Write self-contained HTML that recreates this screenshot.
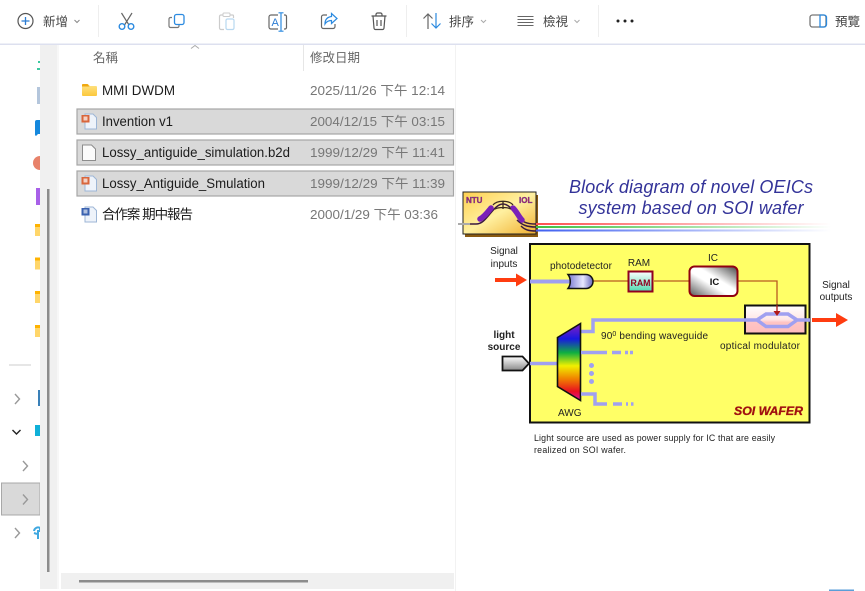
<!DOCTYPE html>
<html><head><meta charset="utf-8">
<style>
html,body{margin:0;padding:0;background:#fff;width:865px;height:591px;overflow:hidden}
svg{display:block;filter:blur(.3px)}
.ui{font-family:"Liberation Sans","Noto Sans CJK TC",sans-serif}
.tb{font-size:12.500px;fill:#444}
.n{font-size:13.500px;fill:#1c1c1c}
.d{font-size:13px;fill:#777}
.h{font-size:12.500px;fill:#666}
.dg{font-family:"Liberation Sans",sans-serif;font-size:10px;fill:#222}
</style></head><body>
<svg width="865" height="591" viewBox="0 0 865 591" xmlns="http://www.w3.org/2000/svg" class="ui">
<defs>
<linearGradient id="awg" x1="0" y1="0" x2="0" y2="1">
<stop offset="0" stop-color="#8a20c0"/><stop offset=".2" stop-color="#1818e0"/><stop offset=".38" stop-color="#10b040"/><stop offset=".55" stop-color="#f0f000"/><stop offset=".72" stop-color="#f08000"/><stop offset=".88" stop-color="#e81020"/><stop offset="1" stop-color="#e010a0"/>
</linearGradient>
<linearGradient id="ic" x1="0" y1="1" x2="1" y2="0"><stop offset="0" stop-color="#555"/><stop offset=".42" stop-color="#fff"/><stop offset=".58" stop-color="#fff"/><stop offset="1" stop-color="#444"/></linearGradient>
<linearGradient id="logo" x1="0" y1="0" x2="1" y2="1"><stop offset="0" stop-color="#ffd050"/><stop offset=".5" stop-color="#fff0a0"/><stop offset="1" stop-color="#f0b030"/></linearGradient>
<linearGradient id="mod" x1="0" y1="0" x2="0" y2="1"><stop offset="0" stop-color="#fff"/><stop offset=".5" stop-color="#ffe6e6"/><stop offset=".6" stop-color="#ffc4c4"/><stop offset="1" stop-color="#ffbcbc"/></linearGradient>
<linearGradient id="pd" x1="0" y1="0" x2="1" y2="0"><stop offset="0" stop-color="#7878d0"/><stop offset=".6" stop-color="#e8e8ff"/><stop offset="1" stop-color="#6666bb"/></linearGradient>
<linearGradient id="ram" x1="0" y1="0" x2="0" y2="1"><stop offset="0" stop-color="#fff"/><stop offset="1" stop-color="#50d8b0"/></linearGradient>
<linearGradient id="ls" x1="0" y1="0" x2="0" y2="1"><stop offset="0" stop-color="#fff"/><stop offset="1" stop-color="#888"/></linearGradient>
<linearGradient id="fr" x1="0" y1="0" x2="1" y2="0"><stop offset="0" stop-color="#ff5050"/><stop offset="1" stop-color="#ff5050" stop-opacity="0"/></linearGradient>
<linearGradient id="fg" x1="0" y1="0" x2="1" y2="0"><stop offset="0" stop-color="#40c040"/><stop offset="1" stop-color="#40c040" stop-opacity="0"/></linearGradient>
<linearGradient id="fb" x1="0" y1="0" x2="1" y2="0"><stop offset="0" stop-color="#4060f0"/><stop offset="1" stop-color="#4060f0" stop-opacity="0"/></linearGradient>
<linearGradient id="fold" x1="0" y1="0" x2="0" y2="1"><stop offset="0" stop-color="#ffe58a"/><stop offset="1" stop-color="#fcc83c"/></linearGradient>
</defs>

<!-- toolbar -->
<rect x="0" y="43.500" width="865" height="1.500" fill="#dde0ef"/>
<g fill="none" stroke="#eee"><path d="M98.500 5V37M406.500 5V37M598.500 5V37"/></g>
<circle cx="25.500" cy="21" r="7.500" fill="none" stroke="#555" stroke-width="1.200"/>
<path d="M25.500 17v8M21.500 21h8" stroke="#2b7cd3" stroke-width="1.300"/>
<text x="43" y="26" class="tb">新增</text>
<path d="M74.500 20l2.500 2.500 2.500-2.500" fill="none" stroke="#888"/>
<!-- cut -->
<path d="M121.500 13l7.500 12M132 13l-7.500 12" fill="none" stroke="#666" stroke-width="1.200"/>
<circle cx="122" cy="26.500" r="2.800" fill="none" stroke="#2b8ae0" stroke-width="1.400"/>
<circle cx="131" cy="26.500" r="2.800" fill="none" stroke="#2b8ae0" stroke-width="1.400"/>
<!-- copy -->
<path d="M172 17.500h-1.500a1.500 1.500 0 0 0-1.500 1.500v7a1.500 1.500 0 0 0 1.500 1.500h7a1.500 1.500 0 0 0 1.500-1.500v-1" fill="none" stroke="#777" stroke-width="1.200"/>
<rect x="174.500" y="14.500" width="9.500" height="10" rx="2" fill="none" stroke="#2b8ae0" stroke-width="1.300"/>
<!-- paste -->
<path d="M223 15h-2a1.500 1.500 0 0 0-1.500 1.500V28a1.500 1.500 0 0 0 1.500 1.500h3M230 15h2.500a1 1 0 0 1 1 1v2" fill="none" stroke="#ccc" stroke-width="1.200"/>
<rect x="223" y="13" width="7" height="3.500" rx="1" fill="none" stroke="#ccc"/>
<rect x="226" y="19" width="8" height="10.500" rx="1.500" fill="none" stroke="#b8d8f0" stroke-width="1.200"/>
<!-- rename -->
<path d="M278 15h-7a2 2 0 0 0-2 2v10a2 2 0 0 0 2 2h7M284 15h1a1.500 1.500 0 0 1 1.500 1.500v11a1.500 1.500 0 0 1-1.500 1.500h-1" fill="none" stroke="#666" stroke-width="1.200"/>
<path d="M281 13v18M278.500 12.800h5M278.500 31.200h5" fill="none" stroke="#2b8ae0" stroke-width="1.200"/>
<text x="271.500" y="26" font-size="11" fill="#2b7cd3">A</text>
<!-- share -->
<path d="M327 15h-3.500a2 2 0 0 0-2 2v9.500a2 2 0 0 0 2 2h9.500a2 2 0 0 0 2-2V24" fill="none" stroke="#666" stroke-width="1.200"/>
<path d="M331.500 13.500l5.500 5-5.500 5v-3c-3 0-5 1-6.500 3.500 0-4.500 2.500-7 6.500-7.500z" fill="none" stroke="#2b8ae0" stroke-width="1.200"/>
<!-- trash -->
<path d="M371.500 16h15M376 16v-1.500a1.500 1.500 0 0 1 1.500-1.500h3a1.500 1.500 0 0 1 1.500 1.500V16M373 16l1 12a1.500 1.500 0 0 0 1.500 1.500h7a1.500 1.500 0 0 0 1.500-1.500l1-12M377 20v6M381 20v6" fill="none" stroke="#555" stroke-width="1.200"/>
<!-- sort -->
<path d="M428 29V14M423.500 18.500L428 14l4.500 4.500" fill="none" stroke="#666" stroke-width="1.200"/>
<path d="M436 13v15M431.500 23.500L436 28l4.500-4.500" fill="none" stroke="#2b8ae0" stroke-width="1.200"/>
<text x="449" y="26" class="tb">排序</text>
<path d="M481 20l2.500 2.500 2.500-2.500" fill="none" stroke="#aaa"/>
<!-- view -->
<path d="M517.500 16.500h16M517.500 19.500h16M517.500 22.500h16M517.500 25.500h16" stroke="#666"/>
<text x="543" y="26" class="tb">檢視</text>
<path d="M574.500 20l2.500 2.500 2.500-2.500" fill="none" stroke="#aaa"/>
<circle cx="618" cy="21" r="1.500" fill="#222"/><circle cx="625" cy="21" r="1.500" fill="#222"/><circle cx="632" cy="21" r="1.500" fill="#222"/>
<!-- preview -->
<rect x="810" y="15" width="16" height="12" rx="2.500" fill="none" stroke="#777" stroke-width="1.300"/>
<path d="M820 15h4a2.500 2.500 0 0 1 2.500 2.500v7a2.500 2.500 0 0 1-2.500 2.500h-4z" fill="none" stroke="#2b8ae0" stroke-width="1.300"/>
<text x="835" y="26" class="tb">預覽</text>

<!-- nav pane stubs -->
<rect x="38" y="61" width="2" height="2" fill="#3cc8a0"/><rect x="37" y="68" width="3" height="2" fill="#3cc8a0"/>
<rect x="37" y="87" width="3" height="17" fill="#b4c6dc"/>
<path d="M35 122a2 2 0 0 1 2-2h3v14h-2l-2 2a2 2 0 0 1-1-2z" fill="#1588dd"/>
<path d="M40 156v14a7 7 0 0 1 0-14z" fill="#e8826a"/>
<rect x="36" y="188" width="4" height="17" fill="#a860e8"/>
<g fill="#ffd66a"><rect x="35" y="224" width="5" height="12"/><rect x="35" y="257.500" width="5" height="12"/><rect x="35" y="291" width="5" height="12"/><rect x="35" y="325" width="5" height="12"/></g>
<g fill="#ffb300"><rect x="35" y="224" width="5" height="3"/><rect x="35" y="257.500" width="5" height="3"/><rect x="35" y="291" width="5" height="3"/><rect x="35" y="325" width="5" height="3"/></g>
<rect x="9" y="364" width="22" height="2" fill="#e6e6e6"/>
<rect x="38" y="390" width="2" height="16" fill="#3a80b8"/>
<rect x="35" y="425" width="5" height="11" fill="#10b0d8"/>
<rect x="1.500" y="483" width="38.500" height="32" fill="#d9d9d9" stroke="#a8a8a8"/>
<rect x="40" y="483" width="1" height="33" fill="#f0f0f0"/>
<path d="M34 531a4 4 0 0 1 6-3v3h-2v8M34 533l3 1" fill="none" stroke="#40a8e0" stroke-width="2"/>
<g fill="none" stroke="#999" stroke-width="1.400">
<path d="M15 394l4.500 5-4.500 5M23 461l4.500 5-4.500 5M23 494.500l4.500 5-4.500 5M15 528l4.500 5-4.500 5"/></g>
<path d="M12.500 430l4 4 4-4" fill="none" stroke="#222" stroke-width="1.400"/>

<!-- nav scrollbar -->
<rect x="40" y="45" width="17" height="544" fill="#f0f0f0"/>
<rect x="57" y="45" width="2" height="544" fill="#f7f7f7"/>
<rect x="47" y="189" width="2.500" height="383" fill="#8c8c8c"/>

<!-- list header -->
<path d="M191 48.500l4-3 4 3" fill="none" stroke="#aaa"/>
<text x="93" y="62" class="h">名稱</text>
<rect x="303" y="45" width="1" height="26" fill="#e6e6e6"/>
<text x="310" y="62" class="h">修改日期</text>
<rect x="455" y="45" width="1" height="546" fill="#f2f2f2"/>

<!-- rows -->
<g fill="#d9d9d9" stroke="#a6a6a6" stroke-width="1.200">
<rect x="77" y="109" width="376.500" height="25"/>
<rect x="77" y="140" width="376.500" height="25"/>
<rect x="77" y="171" width="376.500" height="25"/>
</g>

<!-- folder icon -->
<path d="M82 85a1 1 0 0 1 1-1h5l2 2h6a1 1 0 0 1 1 1v8a1 1 0 0 1-1 1H83a1 1 0 0 1-1-1z" fill="url(#fold)"/>
<path d="M82 85a1 1 0 0 1 1-1h4.500l2 2.500H82z" fill="#f0a810"/>
<text x="102" y="95" class="n" textLength="73" lengthAdjust="spacingAndGlyphs">MMI DWDM</text>
<text x="310" y="95" class="d" textLength="135" lengthAdjust="spacingAndGlyphs">2025/11/26 下午 12:14</text>

<!-- ppt icon 1 -->
<path d="M85 114h8l3.500 3.500V129H85z" fill="#eef3fa" stroke="#9db6d6"/><rect x="81.500" y="115" width="8" height="7.500" fill="#d9663c"/><rect x="83.500" y="116.500" width="4" height="4" fill="#fff" opacity=".7"/>
<text x="102" y="126" class="n" textLength="71" lengthAdjust="spacingAndGlyphs">Invention v1</text>
<text x="310" y="126" class="d" textLength="135" lengthAdjust="spacingAndGlyphs">2004/12/15 下午 03:15</text>

<path d="M82.500 145h9l4 4v11.500h-13z" fill="#fbfbfb" stroke="#8c8c8c"/>
<text x="102" y="157" class="n" textLength="188" lengthAdjust="spacingAndGlyphs">Lossy_antiguide_simulation.b2d</text>
<text x="310" y="157" class="d" textLength="135" lengthAdjust="spacingAndGlyphs">1999/12/29 下午 11:41</text>

<g transform="translate(0,62)"><path d="M85 114h8l3.500 3.500V129H85z" fill="#eef3fa" stroke="#9db6d6"/><rect x="81.500" y="115" width="8" height="7.500" fill="#d9663c"/><rect x="83.500" y="116.500" width="4" height="4" fill="#fff" opacity=".7"/></g>
<text x="102" y="188" class="n" textLength="163" lengthAdjust="spacingAndGlyphs">Lossy_Antiguide_Smulation</text>
<text x="310" y="188" class="d" textLength="135" lengthAdjust="spacingAndGlyphs">1999/12/29 下午 11:39</text>

<g transform="translate(0,93)"><path d="M85 114h8l3.500 3.500V129H85z" fill="#eef3fa" stroke="#9db6d6"/><rect x="81.500" y="115" width="8" height="7.500" fill="#3a62b0"/><rect x="83.500" y="116.500" width="4" height="4" fill="#fff" opacity=".6"/></g>
<text x="102" y="219" class="n" font-size="13" textLength="91">合作案 期中報告</text>
<text x="310" y="219" class="d" textLength="128" lengthAdjust="spacingAndGlyphs">2000/1/29 下午 03:36</text>

<!-- h scrollbar -->
<rect x="61" y="573" width="393" height="16" fill="#f0f0f0"/>
<rect x="79" y="580" width="229" height="2.500" fill="#8c8c8c"/>

<!-- bottom right artefact -->
<rect x="829" y="589.500" width="25" height="1.500" fill="#5a9ed8"/>

<!-- diagram -->
<text x="691" y="193" text-anchor="middle" font-size="18" font-style="italic" fill="#333399" textLength="244">Block diagram of novel OEICs</text>
<text x="691" y="214" text-anchor="middle" font-size="18" font-style="italic" fill="#333399" textLength="225">system based on SOI wafer</text>

<!-- logo -->
<rect x="465" y="195" width="73" height="42" fill="#8a5a10"/>
<rect x="463" y="192" width="73" height="42" fill="url(#logo)" stroke="#222"/>
<rect x="536" y="223" width="295" height="2" fill="url(#fr)"/>
<rect x="536" y="226" width="295" height="2" fill="url(#fg)"/>
<rect x="536" y="229.500" width="295" height="2" fill="url(#fb)"/>
<path d="M458 224h12" stroke="#aaa" stroke-width="2"/>
<path d="M470 224h6c5 0 8-3 13-9 5-6 9-11 14-11s9 5 14 11c5 7 9 9 19 9M517 220c5 5 10 7 19 7M521 226c4 4 8 5 15 5" fill="none" stroke="#3a1a40" stroke-width="1.500"/>
<path d="M480 219c4-2 7-6 11-11M513 208c4 4 6 9 9 12" fill="none" stroke="#7a20b8" stroke-width="5.500" stroke-linecap="round"/>
<path d="M493 205c4-5 16-5 20 0M495 209c4-2 12-2 16 0M503 201v8" fill="none" stroke="#3a2a20" stroke-width="1.300"/>
<text x="466" y="203" font-size="8" font-weight="bold" fill="#c02060" stroke="#3030a0" stroke-width=".3">NTU</text>
<text x="519" y="203" font-size="8" font-weight="bold" fill="#c02060" stroke="#3030a0" stroke-width=".3">IOL</text>

<!-- wafer -->
<rect x="530" y="244" width="279.500" height="178.500" fill="#ffff66" stroke="#111" stroke-width="2"/>

<text x="504" y="254" text-anchor="middle" class="dg">Signal</text>
<text x="504" y="267" text-anchor="middle" class="dg">inputs</text>
<text x="581" y="269" text-anchor="middle" class="dg" textLength="62">photodetector</text>
<text x="639" y="266" text-anchor="middle" class="dg">RAM</text>
<text x="713" y="261" text-anchor="middle" class="dg">IC</text>
<text x="836" y="288" text-anchor="middle" class="dg">Signal</text>
<text x="836" y="300" text-anchor="middle" class="dg">outputs</text>
<text x="504" y="338" text-anchor="middle" class="dg" font-weight="bold">light</text>
<text x="504" y="350" text-anchor="middle" class="dg" font-weight="bold">source</text>
<text x="601" y="339" class="dg" textLength="107">90<tspan font-size="7" dy="-3">0</tspan><tspan dy="3"> bending waveguide</tspan></text>
<text x="720" y="349" class="dg" textLength="80">optical modulator</text>
<text x="558" y="416" class="dg">AWG</text>
<text x="734" y="415" font-size="11.500" font-weight="bold" font-style="italic" fill="#a01010" stroke="#a01010" stroke-width=".3" textLength="69" lengthAdjust="spacingAndGlyphs">SOI WAFER</text>
<text x="534" y="441" font-family="Liberation Sans,sans-serif" font-size="8.800" fill="#222" textLength="241">Light source are used as power supply for IC that are easily</text>
<text x="534" y="453" font-family="Liberation Sans,sans-serif" font-size="8.800" fill="#222" textLength="92">realized on SOI wafer.</text>

<!-- signal input -->
<path d="M495 278h21v-4.500l11 6.500-11 6.500V282h-21z" fill="#ff3c10"/>
<path d="M530 281.500h42" stroke="#a0a0f0" stroke-width="4"/>
<path d="M592 281h36M654 281h35M738 281h39v24" fill="none" stroke="#b85a20" stroke-width="1.300"/>
<path d="M568 274.500h18a7 7 0 0 1 7 7 7 7 0 0 1-7 7h-18c3-4 3-10 0-14z" fill="url(#pd)" stroke="#111" stroke-width="1.500"/>
<rect x="628.500" y="271.500" width="24" height="20" fill="url(#ram)" stroke="#900020" stroke-width="2"/>
<text x="640.500" y="286" text-anchor="middle" font-size="9.500" font-weight="bold" fill="#900020" textLength="20" lengthAdjust="spacingAndGlyphs">RAM</text>
<rect x="689.500" y="266.500" width="48" height="29.500" rx="5" fill="url(#ic)" stroke="#900010" stroke-width="2"/>
<text x="714.500" y="285" text-anchor="middle" font-size="9.500" font-weight="bold" fill="#111">IC</text>

<!-- modulator -->
<rect x="745" y="305.500" width="60.500" height="28" fill="url(#mod)" stroke="#111" stroke-width="2"/>
<path d="M580 331.500h13V320h164l9-6h22l9 6h13M757 320l9 6.500h22l9-6.500" fill="none" stroke="#a0a0f0" stroke-width="3.500"/>
<path d="M777 305v9" stroke="#b01818" stroke-width="1.300"/>
<path d="M773.500 311l3.500 5 3.500-5z" fill="#b01818"/>
<path d="M812 318h24v-5l12 7-12 7v-5h-24z" fill="#ff3c10"/>

<!-- AWG -->
<path d="M530 363.500h27" stroke="#a0a0f0" stroke-width="3.500"/>
<path d="M557.500 337.500l23-14v77l-23-14z" fill="url(#awg)" stroke="#111" stroke-width="1.600"/>
<path d="M502.500 356.500h20l6.500 7-6.500 7h-20z" fill="url(#ls)" stroke="#111" stroke-width="1.800"/>
<g fill="none" stroke="#a0a0f0" stroke-width="3.500">
<path d="M581 352.500h26M612 352.500h9M625 352.500h3M630 352.500h3"/>
<path d="M581 394h14v10h12M613 404h9M626 404h2M631 404h2.500"/>
</g>
<circle cx="591.500" cy="365.500" r="2.500" fill="#a0a0f0"/>
<circle cx="591.500" cy="373.500" r="2.500" fill="#a0a0f0"/>
<circle cx="591.500" cy="381.500" r="2.500" fill="#a0a0f0"/>
</svg>
</body></html>
